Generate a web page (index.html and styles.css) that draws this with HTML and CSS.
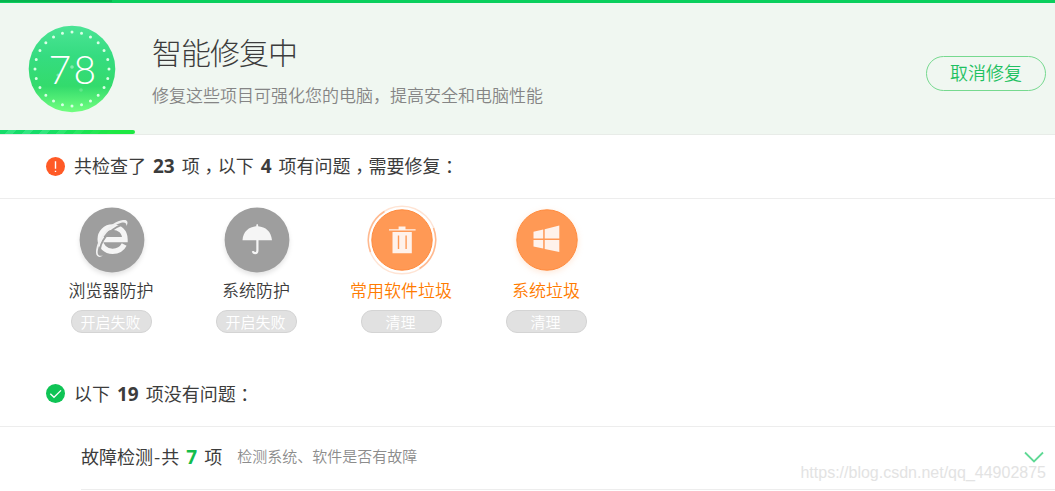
FILE: index.html
```html
<!DOCTYPE html>
<html lang="zh-CN">
<head>
  <meta charset="UTF-8" />
  <meta name="viewport" content="width=device-width, initial-scale=1.0"/>
  <title>智能修复中</title>
  <link rel="stylesheet" href="styles.css">
</head>
<body>
  <div class="top-bar"><div class="top-bar-done"></div></div>

  <header class="header">
    <svg class="score" viewBox="0 0 88 88">
      <defs>
        <linearGradient id="score-bg" x1="0" y1="0" x2="0" y2="1">
          <stop offset="0" stop-color="#4be495"/>
          <stop offset="0.35" stop-color="#35dc80"/>
          <stop offset="0.7" stop-color="#33db6c"/>
          <stop offset="1" stop-color="#72ff80"/>
        </linearGradient>
      </defs>
      <circle cx="44" cy="44" r="43.3" fill="url(#score-bg)"/>
      <circle class="score-dots" cx="44" cy="44" r="37" pathLength="240"/>
      <circle cx="44" cy="42" r="1.8" fill="#fff" opacity=".4"/>
      <circle cx="30" cy="50" r="1.6" fill="#fff" opacity=".3"/>
      <circle cx="53" cy="65" r="1.8" fill="#fff" opacity=".2"/>
      <text class="score-num" x="20.5" y="58.5">7</text>
      <text class="score-num" x="45.5" y="58.5">8</text>
    </svg>
    <div class="header-text">
      <h1>智能修复中</h1>
      <p>修复这些项目可强化您的电脑，提高安全和电脑性能</p>
    </div>
    <button class="cancel-btn">取消修复</button>
    <div class="progress"></div>
  </header>

  <section class="section-title problems">
    <svg class="status-icon" viewBox="0 0 19 19">
      <circle cx="9.5" cy="9.5" r="9.5" fill="#ff5a26"/>
      <path d="M9.5 4.2v7.6M9.5 13.7v1.3" stroke="#fff" stroke-width="1.4"/>
    </svg>
    <h2>共检查了<b>23</b>项<i lang="zh-TW">，</i>以下<b>4</b>项有问题<i lang="zh-TW">，</i>需要修复<i class="colon" lang="zh-TW">：</i></h2>
  </section>

  <ul class="items">
    <li class="item">
      <svg class="item-icon gray" viewBox="0 0 70 70">
        <circle cx="35" cy="35" r="32.4" fill="#9e9e9e"/>
        <g fill="none">
          <path d="M25 34.6H48C48 26.5 42.5 22 35.6 22C28.3 22 23.2 27.6 23.2 34.2C23.2 41.2 28.6 46.4 35.6 46.4C40.8 46.4 45 43.9 47.2 39.6" stroke="#f5f5f5" stroke-width="5.4"/>
          <path d="M23.2 46C22.5 38 31 25 44.5 19.8" stroke="#9e9e9e" stroke-width="1.8"/>
        </g>
        <path d="M26 50.6C21 54 17.5 50.5 19.6 42.5C22.5 31 33 17 46 15C50.5 14.3 51.5 17 49.5 21C49.5 17.8 47.5 16.8 43.5 18C33 21 24.5 33 21.5 42.5C19.6 49 21 51.8 26 50.6Z" fill="#f0f0f0"/>
      </svg>
      <span class="item-name">浏览器防护</span>
      <button class="item-btn">开启失败</button>
    </li>
    <li class="item">
      <svg class="item-icon gray" viewBox="0 0 70 70">
        <circle cx="35" cy="35" r="32.4" fill="#9e9e9e"/>
        <path d="M20.5 35.3C21 26.5 27 21.8 34.3 21.3V19.9Q35.2 18.1 36.1 19.9V21.3C43.5 21.8 49.3 26.5 50 35.3Z" fill="#f5f5f5"/>
        <path d="M35.4 34.5V45.5Q35.4 48.1 33.2 48.1Q31.2 48.1 30.9 46.1" fill="none" stroke="#f5f5f5" stroke-width="2.2"/>
      </svg>
      <span class="item-name">系统防护</span>
      <button class="item-btn">开启失败</button>
    </li>
    <li class="item warn">
      <svg class="item-icon" viewBox="0 0 70 70">
        <circle cx="35" cy="35" r="33.8" fill="none" stroke="#ffe4d4" stroke-width="1.4"/>
        <path d="M17.5 6.5A33.5 33.5 0 0 0 3.5 47M52.5 63.5A33.5 33.5 0 0 0 66.5 23" fill="none" stroke="#ffb98f" stroke-width="1.5"/>
        <circle cx="35" cy="35" r="30.2" fill="#ff9955" stroke="#ff8b3e"/>
        <g fill="#fff2eb">
          <path d="M22 24.2H31.6V21.6H38.5V24.2H48.6V25.6H22Z"/>
          <path d="M25.5 27H44.8V48.3H25.5ZM30.8 30.5V44H32.2V30.5ZM38.4 30.5V44H39.8V30.5Z" fill-rule="evenodd"/>
        </g>
      </svg>
      <span class="item-name">常用软件垃圾</span>
      <button class="item-btn">清理</button>
    </li>
    <li class="item warn">
      <svg class="item-icon glow" viewBox="0 0 70 70">
        <circle cx="35" cy="35" r="30.2" fill="#ff9955" stroke="#ff8b3e"/>
        <path d="M21.5 26.7L31.2 24.6V33.4H21.5ZM32.7 24.2L47.3 20.4V33.4H32.7ZM21.5 34.9H31.2V43.5L21.5 41.6ZM32.7 34.9H47.3V47L32.7 43.9Z" fill="#fff2eb"/>
      </svg>
      <span class="item-name">系统垃圾</span>
      <button class="item-btn">清理</button>
    </li>
  </ul>

  <section class="section-title passed">
    <svg class="status-icon" viewBox="0 0 19 19">
      <circle cx="9.5" cy="9.5" r="9.5" fill="#0fc455"/>
      <path d="M4.3 9.7L8 13.3L15 6.4" fill="none" stroke="#fff" stroke-width="1.3"/>
    </svg>
    <h2>以下<b>19</b>项没有问题<i class="colon" lang="zh-TW">：</i></h2>
  </section>

  <section class="group">
    <h2>故障检测<span class="dash">-</span>共<b class="ok">7</b>项</h2>
    <p>检测系统、软件是否有故障</p>
    <svg class="arrow" viewBox="0 0 20 12">
      <path d="M1 1.5L10 10.5L19 1.5" fill="none" stroke="#5fd995" stroke-width="1.8"/>
    </svg>
  </section>

  <div class="watermark">https://blog.csdn.net/qq_44902875</div>
</body>
</html>
```
FILE: styles.css
```css
:root {
  --green: #0acf5d;
  --line: #ededed;
  --text: #3c3c3c;
  --orange: #ff7b00;
}

* {
  margin: 0;
  padding: 0;
  box-sizing: border-box;
}

body {
  position: relative;
  height: 491px;
  overflow: hidden;
  background-color: #fff;
  color: var(--text);
  font-family: "Noto Sans CJK SC", sans-serif;
  font-weight: 350;
}

h1,
h2 {
  font-weight: 300;
  white-space: nowrap;
}

button {
  font-family: inherit;
  font-weight: inherit;
}

.top-bar {
  height: 3px;
  background-color: var(--green);
}

.top-bar-done {
  width: 112px;
  height: 2px;
  background-color: #06b44f;
}

.header {
  position: relative;
  display: flex;
  align-items: flex-start;
  height: 132px;
  padding: 0 9px 0 28px;
  background-color: #f0f7f1;
  border-bottom: 1px solid #e8ece8;
}

.score {
  width: 88px;
  height: 88px;
  margin-top: 22px;
}

.score-dots {
  fill: none;
  stroke: #d9ffe6;
  stroke-width: 3;
  stroke-linecap: round;
  stroke-dasharray: 0 10;
}

.score-num {
  fill: #fff;
  font-family: Lato, "Open Sans", sans-serif;
  font-weight: 300;
  font-size: 39px;
}

.header-text {
  flex: 1;
  margin: 26px 0 0 36px;
}

.header-text h1 {
  font-size: 30px;
  line-height: 44px;
  letter-spacing: -1px;
}

.header-text p {
  margin-top: 9px;
  color: #858585;
  font-size: 17px;
  line-height: 26px;
}

.cancel-btn {
  width: 120px;
  height: 35px;
  margin-top: 53px;
  padding-bottom: 3px;
  border: 1px solid #76d98f;
  border-radius: 18px;
  background: none;
  color: #1fc162;
  font-size: 18px;
  line-height: 30px;
}

.progress {
  position: absolute;
  left: 0;
  bottom: 0;
  width: 135px;
  height: 4px;
  border-radius: 0 2px 2px 0;
  background:
    linear-gradient(90deg, transparent 30%, #1ee843 85%),
    repeating-linear-gradient(135deg, #16dc69 0 6px, #33e681 6px 12px);
}

.section-title {
  display: flex;
  align-items: center;
  gap: 9px;
  padding-left: 46px;
  border-bottom: 1px solid var(--line);
}

.section-title h2,
.group h2 {
  padding-bottom: 1px;
  font-size: 18px;
  font-weight: 400;
  line-height: 26px;
}

h2 b {
  margin: 0 7px;
  font-family: "Open Sans", "Noto Sans", sans-serif;
  font-size: 19px;
}

/* centred full-width punctuation, the comma lowered to the baseline */
h2 i {
  font-family: "Noto Sans CJK TC", sans-serif;
  font-style: normal;
  line-height: 0;
  vertical-align: -5px;
}

h2 .colon {
  vertical-align: -1px;
}

.problems {
  height: 64px;
  padding-bottom: 1px;
}

.passed {
  height: 65px;
  padding-bottom: 1px;
}

.status-icon {
  width: 19px;
  height: 19px;
}

.items {
  display: grid;
  grid-template-columns: repeat(4, 145px);
  height: 163px;
  padding: 6px 0 0 39px;
  list-style: none;
}

.item {
  display: flex;
  flex-direction: column;
  align-items: center;
}

.item-icon {
  width: 70px;
  height: 70px;
  overflow: visible;
}

.item-icon.gray {
  filter: drop-shadow(0 3px 2px rgba(0, 0, 0, 0.1));
}

.item-icon.glow {
  filter: drop-shadow(0 2px 3px rgba(255, 140, 60, 0.2));
}

.item-name {
  margin: 2px 1px 0 0;
  font-size: 17px;
  line-height: 26px;
}

.warn .item-name {
  color: var(--orange);
}

.item-btn {
  width: 81px;
  height: 23px;
  margin-top: 7px;
  padding-right: 2px;
  border: 1px solid #d4d4d4;
  border-radius: 11px;
  background-color: #e1e1e1;
  color: #fff;
  font-size: 15px;
  line-height: 20px;
}

.group {
  display: flex;
  align-items: center;
  height: 63px;
  margin-left: 81px;
  padding: 0 11px 3px 0;
  border-bottom: 1px solid var(--line);
}

.group p {
  flex: 1;
  margin-left: 15px;
  padding-bottom: 3px;
  color: #8c8c8c;
  font-size: 15px;
}

.dash {
  padding: 0 1px;
}

.ok {
  color: #14bd4c;
}

.arrow {
  width: 20px;
  height: 12px;
}

.watermark {
  position: absolute;
  right: 9px;
  top: 463px;
  color: #e3e3e3;
  font-family: "Liberation Sans", sans-serif;
  font-size: 16px;
  font-weight: 400;
  line-height: 20px;
}
```
